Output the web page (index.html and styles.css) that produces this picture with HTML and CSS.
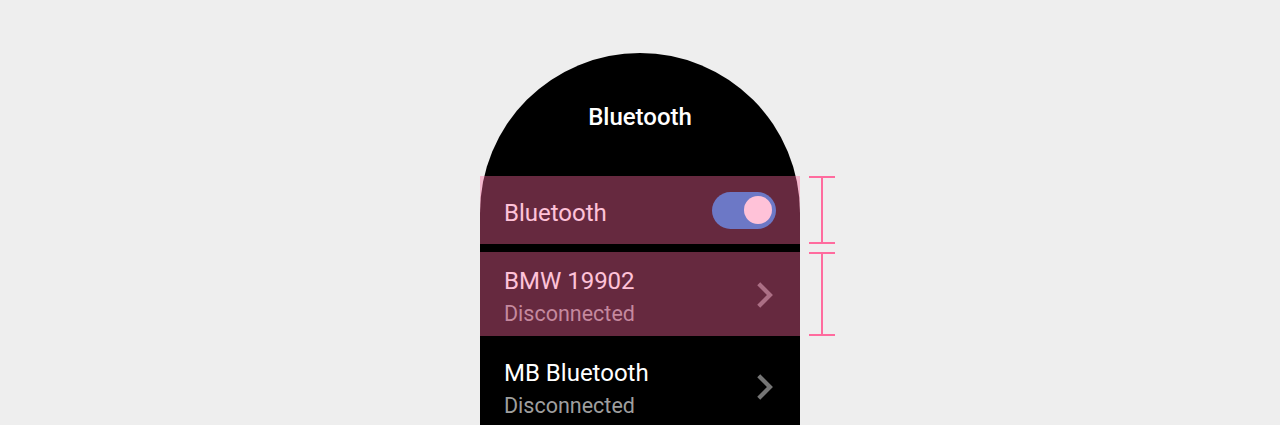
FILE: index.html
```html
<!DOCTYPE html>
<html lang="en">
<head>
<meta charset="utf-8">
<title>Bluetooth</title>
<link rel="stylesheet" href="styles.css">
</head>
<body>
<div class="stage">
  <div class="watch">
    <header class="watch-header">
      <h1 class="title">Bluetooth</h1>
    </header>
    <div class="list">
      <div class="row row-toggle highlighted">
        <span class="label">Bluetooth</span>
        <span class="switch"><span class="thumb"></span></span>
        <span class="marker"></span>
      </div>
      <div class="row row-device highlighted">
        <div class="texts">
          <span class="primary">BMW 19902</span>
          <span class="secondary">Disconnected</span>
        </div>
        <svg class="chevron" viewBox="8 5.5 8.5 13" width="18" height="28" aria-hidden="true"><path d="M10 6L8.59 7.41 13.17 12l-4.58 4.59L10 18l6-6z"/></svg>
        <span class="marker"></span>
      </div>
      <div class="row row-device">
        <div class="texts">
          <span class="primary">MB Bluetooth</span>
          <span class="secondary">Disconnected</span>
        </div>
        <svg class="chevron" viewBox="8 5.5 8.5 13" width="18" height="28" aria-hidden="true"><path d="M10 6L8.59 7.41 13.17 12l-4.58 4.59L10 18l6-6z"/></svg>
      </div>
    </div>
  </div>
</div>
</body>
</html>
```

FILE: styles.css
```css
html, body {
  margin: 0;
  padding: 0;
  height: 425px;
  overflow: hidden;
  background: #eeeeee;
  font-family: Roboto, "Noto Sans", sans-serif;
}

.stage {
  display: flex;
  justify-content: center;
  padding-top: 53px;
}

.watch {
  width: 320px;
  height: 440px;
  background: #000;
  border-radius: 160px 160px 0 0;
  display: flex;
  flex-direction: column;
}

.watch-header {
  box-sizing: border-box;
  height: 123px;
  padding-top: 48px;
  text-align: center;
}

.title {
  margin: 0;
  font-size: 24px;
  line-height: 32px;
  font-weight: 500;
  color: #fff;
}

.list {
  display: flex;
  flex-direction: column;
  gap: 8px;
}

.row {
  position: relative;
  display: flex;
  align-items: center;
  justify-content: space-between;
  box-sizing: border-box;
  padding: 0 24px;
}

.row.highlighted::after {
  content: "";
  position: absolute;
  inset: 0;
  background: rgba(255, 102, 158, 0.4);
  pointer-events: none;
}

.row-toggle {
  height: 68px;
}

.label {
  margin-top: 6px;
  font-size: 24px;
  line-height: 32px;
  color: #fff;
}

.switch {
  position: relative;
  display: flex;
  align-items: center;
  justify-content: flex-end;
  box-sizing: border-box;
  width: 64px;
  height: 37px;
  padding: 0 4px;
  border-radius: 19px;
  background: #0a84e1;
}

.thumb {
  width: 28px;
  height: 28px;
  border-radius: 50%;
  background: #fff;
}

.row-device {
  height: 84px;
  padding-top: 13px;
  padding-bottom: 5px;
  padding-right: 26px;
}

.texts {
  display: flex;
  flex-direction: column;
}

.primary {
  font-size: 24px;
  line-height: 32px;
  color: #fff;
}

.secondary {
  font-size: 21.5px;
  line-height: 34px;
  color: #9e9e9e;
}

.chevron {
  fill: #757575;
  margin-top: -6px;
}

.marker {
  position: absolute;
  top: 0;
  bottom: 0;
  left: calc(100% + 9px);
  width: 26px;
  box-sizing: border-box;
  border-top: 2px solid #ff6b9e;
  border-bottom: 2px solid #ff6b9e;
}

.marker::before {
  content: "";
  position: absolute;
  top: 0;
  bottom: 0;
  left: 12px;
  width: 2px;
  background: #ff6b9e;
}
```
